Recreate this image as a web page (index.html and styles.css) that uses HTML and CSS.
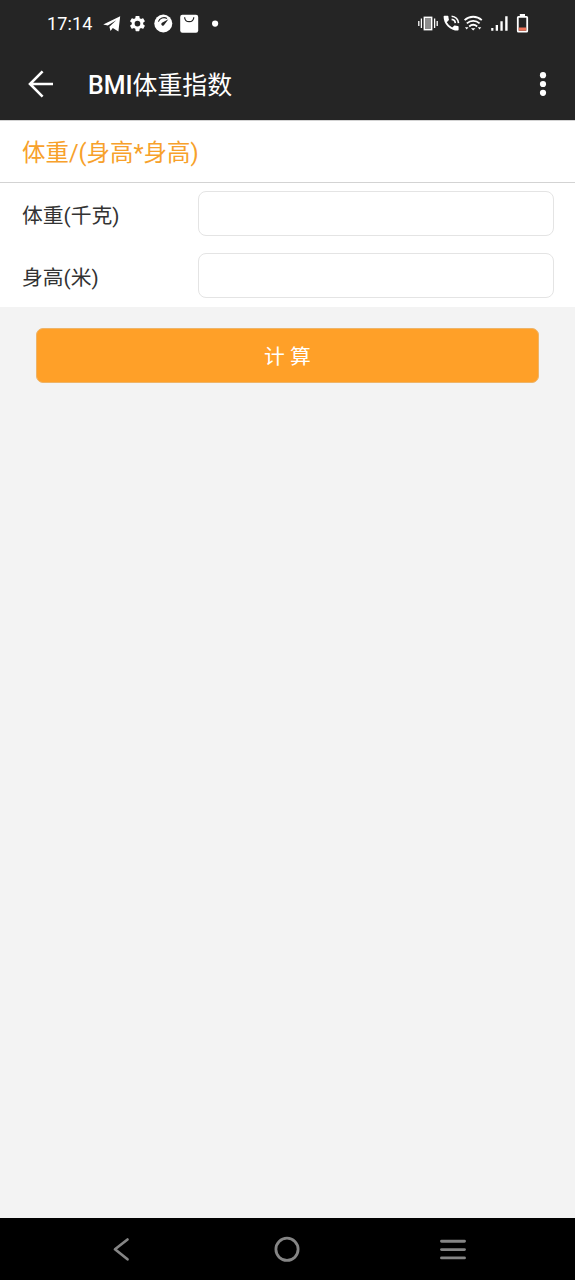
FILE: index.html
```html
<!DOCTYPE html>
<html lang="zh-CN">
<head>
<meta charset="utf-8">
<title>BMI体重指数</title>
<link rel="stylesheet" href="styles.css">
</head>
<body>
<div class="screen">
  <div class="status">
    <span class="clock">17:14</span>
    <svg class="notifications" width="120" height="24" viewBox="102 12 120 24" fill="#fff">
      <path d="M103.2 24.4 120.2 16.2 118.4 31.4 112.8 27.9 110.5 31 109.4 26.7 116.2 20.2 107.8 25.5Z"/>
      <g transform="translate(128 14.1) scale(.79)"><path d="M19.14 12.94c.04-.3.06-.61.06-.94s-.02-.64-.07-.94l2.03-1.58c.18-.14.23-.41.12-.61l-1.92-3.32c-.12-.22-.37-.29-.59-.22l-2.39.96c-.5-.38-1.03-.7-1.62-.94l-.36-2.54c-.04-.24-.24-.41-.48-.41h-3.84c-.24 0-.43.17-.47.41l-.36 2.54c-.59.24-1.13.57-1.62.94l-2.39-.96c-.22-.08-.47 0-.59.22L2.74 8.87c-.12.21-.08.47.12.61l2.03 1.58c-.05.3-.09.63-.09.94s.02.64.07.94l-2.03 1.58c-.18.14-.23.41-.12.61l1.92 3.32c.12.22.37.29.59.22l2.39-.96c.5.38 1.03.7 1.62.94l.36 2.54c.05.24.24.41.48.41h3.84c.24 0 .44-.17.47-.41l.36-2.54c.59-.24 1.13-.56 1.62-.94l2.39.96c.22.08.47 0 .59-.22l1.92-3.32c.12-.22.07-.47-.12-.61zM12 15.6a3.6 3.6 0 1 1 0-7.2 3.6 3.6 0 0 1 0 7.2z"/></g>
      <circle cx="163.3" cy="23.5" r="9"/>
      <path d="M158.4 21.6a6 6 0 0 1 8.6-3.2" fill="none" stroke="#252525" stroke-width="1.1"/>
      <path d="M168.4 19.2 164.3 24.8a1.6 1.6 0 1 1-2.3-2.1Z" fill="#252525"/>
      <rect x="180.2" y="14.8" width="18" height="18" rx="2.2"/>
      <path d="M184.6 17.2c.4 6 8.8 6 9.2 0" fill="none" stroke="#252525" stroke-width="1.2"/>
      <circle cx="215.1" cy="23.6" r="3.1"/>
    </svg>
    <svg class="indicators" width="114" height="24" viewBox="416 12 114 24" fill="#fff">
      <g fill="none" stroke="#fff">
        <rect x="424.3" y="17.3" width="7.4" height="12.4" fill="#8d8d8d" stroke-width="1.4"/>
        <path d="M421.4 18.5v9.5M434.6 18.5v9.5M418.8 21v5M437.2 21v5" stroke-width="1.3"/>
        <path d="M451.6 16.2a7.2 7.2 0 0 1 6.9 6.9M451.6 19.4a4 4 0 0 1 3.7 3.7" stroke-width="1.6"/>
        <path d="M464.6 20.1c5-4.5 12.2-4.5 17.2 0M466.8 23.4c3.8-3.4 9-3.4 12.8 0M469.2 26.5c2.4-2.1 5.6-2.1 8 0" stroke-width="1.8"/>
      </g>
      <path d="M444.4 15.8h3.2c.5 0 .8.3.8.8 0 1 .2 2 .5 2.9.1.3 0 .6-.2.8l-1.9 2a13 13 0 0 0 5.4 5.3l1.9-1.9c.2-.2.5-.3.8-.2.9.3 1.9.5 2.9.5.5 0 .8.3.8.8v3c0 .5-.3.8-.8.8a14.2 14.2 0 0 1-14.2-14.2c0-.4.4-.6.8-.6Z"/>
      <path d="m471 28.2 4.4 0-2.2 2.4ZM465 27.3h3.5l-1.8 2.1ZM477.8 27.3h3.5l-1.8 2.1Z"/>
      <path d="M491.2 28h2.2v2.7h-2.2ZM495.7 25h2.3v5.7h-2.3ZM500.4 21.3h2.3v9.4h-2.3ZM505.2 16.3h2.4v14.4h-2.4Z"/>
      <rect x="519.8" y="14" width="5.2" height="3"/>
      <rect x="517.8" y="16.8" width="9.4" height="14.9" rx=".6" fill="none" stroke="#fff" stroke-width="1.8"/>
      <path d="M518.8 27.5h7.4v3.2h-7.4Z" fill="#ef7358"/>
    </svg>
  </div>
  <header class="appbar">
    <svg class="back" width="28" height="28" viewBox="0 0 28 28" fill="none" stroke="#fff" stroke-width="2.6"><path d="M15.6 1.4 3 14l12.6 12.6M3.2 14H26"/></svg>
    <h1 class="title">BMI<span class="title-cjk">体重指数</span></h1>
    <svg class="more" width="8" height="26" viewBox="0 0 8 26" fill="#fff"><circle cx="4" cy="4.2" r="3.1"/><circle cx="4" cy="13" r="3.1"/><circle cx="4" cy="21.8" r="3.1"/></svg>
  </header>
  <main class="content">
    <form class="form">
      <div class="formula">体重/(身高*身高)</div>
      <label class="row"><span class="label">体重(千克)</span><input class="field" type="text"></label>
      <label class="row"><span class="label">身高(米)</span><input class="field" type="text"></label>
      <div class="actions"><button class="calculate" type="button">计 算</button></div>
    </form>
  </main>
  <nav class="navbar">
    <svg width="18" height="26" viewBox="0 0 18 26" fill="none" stroke="#858585" stroke-width="2.7" stroke-linecap="round" stroke-linejoin="round"><path d="M15.5 3.5 3 13.3l12.5 10"/></svg>
    <svg class="home" width="28" height="28" viewBox="0 0 28 28" fill="none" stroke="#858585" stroke-width="2.8"><circle cx="14" cy="14.3" r="11.1"/></svg>
    <svg width="28" height="24" viewBox="0 0 28 24" fill="none" stroke="#858585" stroke-width="2.9" stroke-linecap="round"><path d="M2.5 4.3h23M2.5 12.6h23M2.5 20.9h23"/></svg>
  </nav>
</div>
</body>
</html>
```

FILE: styles.css
```css
* { box-sizing: border-box; }
body {
  margin: 0;
  background: #f3f3f3;
  color: #333;
  font-family: Roboto, "Noto Sans CJK SC", sans-serif;
}
svg { display: block; flex: none; }
.screen {
  display: flex;
  flex-direction: column;
  height: 1280px;
  width: 575px;
}
.status {
  display: flex;
  align-items: center;
  height: 48px;
  padding: 0 45px 0 47px;
  background: #252525;
  color: #fff;
}
.clock {
  width: 55px;
  font-size: 18px;
  line-height: 24px;
  letter-spacing: .15px;
}
.indicators { margin-left: auto; }
.appbar {
  display: flex;
  align-items: center;
  height: 72px;
  padding: 0 28px 0 27px;
  background: #252525;
  color: #fff;
}
.title {
  margin: 0 auto 0 33px;
  padding-top: 3px;
  font-size: 24.9px;
  font-weight: 500;
  line-height: 36px;
}
.title-cjk { font-weight: 400; }
.content { flex: 1; }
.formula {
  height: 63px;
  padding: 2px 0 0 22px;
  border-top: 1px solid #d3d3d3;
  border-bottom: 1px solid #d3d3d3;
  background: #fff;
  color: #f7a12b;
  font-size: 23.45px;
  line-height: 61px;
}
.row {
  display: flex;
  align-items: center;
  height: 62px;
  padding: 0 21px 1px 22px;
  background: #fff;
}
.label {
  width: 176px;
  padding-top: 4px;
  font-size: 20.8px;
  line-height: 30px;
}
.field {
  flex: 1;
  min-width: 0;
  height: 45px;
  border: 1px solid #e4e4e4;
  border-radius: 8px;
  background: #fff;
  font: inherit;
}
.actions { padding: 21px 36px 0; }
.calculate {
  display: block;
  width: 100%;
  height: 55px;
  padding: 2px 0 0;
  border: 1px solid #eeb468;
  border-radius: 7px;
  background: #ffa028;
  color: #fff;
  font: 20.8px/30px Roboto, "Noto Sans CJK SC", sans-serif;
}
.navbar {
  display: flex;
  align-items: center;
  justify-content: space-between;
  height: 62px;
  padding: 0 108px 0 112px;
  background: #000;
}
.home { margin-left: 5px; }
```
